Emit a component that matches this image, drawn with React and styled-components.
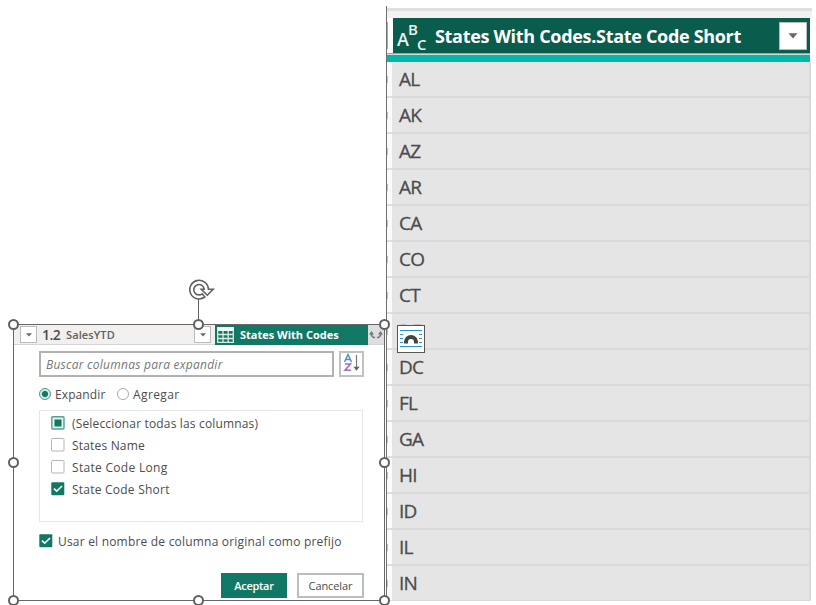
import React from "react";
import styled, { createGlobalStyle } from "styled-components";

const Global = createGlobalStyle`
  *, *::before, *::after { box-sizing: border-box; }
  body { margin: 0; background: #fff; overflow: hidden; }
  svg { display: block; flex: none; }
`;

const Page = styled.main`
  width: 816px;
  height: 605px;
  display: grid;
  grid-template-columns: 386px 426px;
  align-items: start;
  overflow: hidden;
  background: #fff;
  font-family: "Open Sans", "Noto Sans", sans-serif;
  color: #4c4c4c;
`;

const Text = styled.span`
  white-space: nowrap;
  font-size: ${(p) => p.$size || 12}px;
  line-height: 16px;
  letter-spacing: ${(p) => p.$track || 0}px;
  font-weight: ${(p) => p.$weight || 400};
  font-style: ${(p) => (p.$italic ? "italic" : "normal")};
  color: ${(p) => p.$color || "inherit"};
`;

const CodeText = styled(Text)`
  -webkit-text-stroke: 0.3px currentColor;
`;

/* Expand-columns dialog */
const Selection = styled.section`
  position: relative;
  z-index: 2;
  width: 372px;
  height: 277px;
  margin: 324px 0 0 13px;
  border: 1px solid #666;
  background: #fff;
`;

const ColumnBar = styled.header`
  display: flex;
  height: 20px;
  background: #f1f0ef;
  border-bottom: 1px solid #d4d4d4;
`;

const NumberColumn = styled.div`
  display: flex;
  align-items: center;
  width: 201px;
  padding-left: 6px;
`;

const DropButton = styled.span`
  display: flex;
  align-items: center;
  justify-content: center;
  width: ${(p) => p.$size || 17}px;
  height: ${(p) => p.$size || 17}px;
  border: 1px solid #bbb;
  background: #fff;
`;

const NumberLabel = styled.div`
  display: flex;
  align-items: center;
  gap: 6px;
  width: 157px;
  padding: 1px 0 0 5px;
`;

const NestedColumn = styled.div`
  display: flex;
  align-items: center;
  gap: 6px;
  width: 153px;
  height: 20px;
  padding-left: 2px;
  background: #117865;
`;

const ExpandCell = styled.div`
  flex: 1;
  height: 19px;
  display: flex;
  align-items: center;
  justify-content: center;
  background: #dedee0;
`;

const SearchRow = styled.div`
  display: flex;
  gap: 5px;
  margin: 6px 0 0 25px;
`;

const SearchBox = styled.div`
  display: flex;
  align-items: center;
  width: 295px;
  height: 26px;
  padding: 2px 0 0 5px;
  border: 2px solid #b1b1b1;
`;

const SortButton = styled.div`
  width: 25px;
  height: 26px;
  border: 2px solid #c1c1c1;
`;

const RadioRow = styled.div`
  display: flex;
  align-items: center;
  height: 20px;
  margin: 8px 0 0 25px;
`;

const RadioOption = styled.label`
  display: flex;
  align-items: center;
  gap: 4px;
  width: ${(p) => p.$width}px;
`;

const Radio = styled.i`
  width: 12px;
  height: 12px;
  margin-bottom: 3px;
  border-radius: 50%;
  border: 1px solid ${(p) => (p.$on ? "#4a9a89" : "#aaa")};
  background: ${(p) => (p.$on ? "radial-gradient(circle, #117865 0 2.6px, #d9ece8 3.6px)" : "#fff")};
`;

const OptionList = styled.div`
  width: 324px;
  height: 112px;
  margin: 5px 0 0 25px;
  padding: 2px 0 0 11px;
  border: 1px solid #e3e7e9;
`;

const CheckRow = styled.label`
  display: flex;
  align-items: center;
  gap: 7px;
  height: 22px;
  & > svg { margin-bottom: 2px; }
`;

const PrefixRow = styled(CheckRow)`
  gap: 5px;
  margin: 9px 0 0 25px;
`;

const Actions = styled.div`
  display: flex;
  gap: 10px;
  margin: 20px 0 0 207px;
`;

const Button = styled.button`
  width: ${(p) => (p.$primary ? 66 : 67)}px;
  height: 25px;
  padding: 0;
  display: flex;
  align-items: center;
  justify-content: center;
  font-family: inherit;
  border: ${(p) => (p.$primary ? "0" : "2px solid #bdbdbd")};
  background: ${(p) => (p.$primary ? "#117865" : "#fff")};
  color: ${(p) => (p.$primary ? "#fff" : "#4c4c4c")};
`;

const Handle = styled.i`
  position: absolute;
  left: ${(p) => p.$x}px;
  top: ${(p) => p.$y}px;
  width: 11px;
  height: 11px;
  margin: -6px 0 0 -6px;
  border: 2px solid #606060;
  border-radius: 50%;
  background: #fff;
`;

const RotateHandle = styled.svg`
  position: absolute;
  left: 173px;
  top: -46px;
`;

/* State code table */
const Table = styled.section`
  height: 595px;
  margin-top: 6px;
  border-left: 1px solid #707070;
  overflow: hidden;
`;

const TopStrip = styled.div`
  height: 12px;
  border-top: 2px solid #fff;
  background: linear-gradient(#dfdfdf 0 3px, #f4f2f1 3px);
`;

const TableHead = styled.div`
  display: flex;
  width: 423px;
  height: 36px;
  background: #fff;
  border-bottom: 1px solid #92aaa3;
`;

const GutterHead = styled.div`
  width: 6px;
  margin: 4px 0;
  border-left: 1px solid #aaa;
  background: #fff;
`;

const HeadCell = styled.div`
  display: flex;
  align-items: center;
  width: 417px;
  padding: 0 3px 0 4px;
  background: #0a5c4d;
`;

const HeadText = styled.div`
  display: flex;
  width: 344px;
  margin-left: 10px;
`;

const Accent = styled.div`
  height: 8px;
  width: 423px;
  border-top: 1px solid #d7d7d7;
  background: #01b8aa;
`;

const Row = styled.div`
  display: grid;
  grid-template-columns: 6px 418px;
  height: 36px;
`;

const Gutter = styled.div`
  display: flex;
  align-items: center;
  background: #fbfbfb;
  border-bottom: 2px solid #dedede;
  border-right: 1px solid #e4e4e4;
`;

const Tick = styled.i`
  width: 1px;
  height: 7px;
  background: #8ed6d2;
`;

const Cell = styled.div`
  display: flex;
  align-items: center;
  padding-left: 6px;
  background: #e5e5e5;
  border-bottom: 2px solid #d9d9d9;
  border-right: 2px solid #d9d9d9;
`;

const LayoutOptions = styled.div`
  position: absolute;
  z-index: 3;
  left: 397px;
  top: 325px;
  width: 28px;
  height: 28px;
  border: 1px solid #555;
  background: #fff;
`;

const Caret = ({ w = 6 }) => (
  <svg width={w} height={w / 2 + 1} viewBox="0 0 6 4">
    <path d="M0 .2H6L3 3.6Z" fill="#686868" />
  </svg>
);

const Check = ({ state }) => (
  <svg width="14" height="14" viewBox="0 0 14 14">
    {state === "on" && (
      <>
        <rect x=".3" y=".3" width="13" height="13" rx="1" fill="#117865" />
        <path d="M3 6.7 5.7 9.2 11 4" fill="none" stroke="#fff" strokeWidth="1.6" />
      </>
    )}
    {state === "off" && <rect x=".5" y=".5" width="12.5" height="12.5" rx="1" fill="#fff" stroke="#b5b5b5" />}
    {state === "mixed" && (
      <>
        <rect x=".8" y=".8" width="12.2" height="12.2" rx="1" fill="#e3f2ef" stroke="#55a091" strokeWidth="1.4" />
        <rect x="3.5" y="3.5" width="7" height="7" fill="#117865" />
      </>
    )}
  </svg>
);

const TableIcon = () => (
  <svg width="17" height="16" viewBox="0 0 17 16">
    <path fill="#f2f8f6" d="M0 0H17V4H0Z" />
    <path d="M.7 3V15.3H16.3V3M.7 7.5H16.3M.7 11.5H16.3M6 4V15M11.2 4V15" fill="none" stroke="#d8ebe6" strokeWidth="1.3" />
  </svg>
);

const ExpandIcon = () => (
  <svg width="14" height="10" viewBox="0 0 14 10">
    <path d="M2.5 3.5V5.5L4.5 7.5H6M11.5 3.5V5.5L9.5 7.5H8" fill="none" stroke="#777" strokeWidth="1.6" />
    <path d="M0 4.5 2.5 1 5 4.5ZM9 4.5 11.5 1 14 4.5Z" fill="#777" />
  </svg>
);

const SortIcon = () => (
  <svg width="21" height="22" viewBox="0 0 21 22">
    <path d="M3.5 9 7 1.5 10.5 9M4.7 6.6H9.3" fill="none" stroke="#558dcc" strokeWidth="1.5" />
    <path d="M4 11H9.5L4 17.3H10" fill="none" stroke="#a66bc2" strokeWidth="1.6" />
    <path d="M15.5 2V16" stroke="#777" strokeWidth="1.2" />
    <path d="M12.3 13.8H18.7L15.5 17.8Z" fill="#666" />
  </svg>
);

const TypeIcon = styled.div`
  display: flex;
  width: 28px;
  height: 30px;
  color: #e8f2ef;
`;

const Letter = styled.span`
  font-size: ${(p) => p.$size}px;
  line-height: 12px;
  font-weight: 600;
  width: ${(p) => p.$width}px;
  height: 12px;
  margin-top: ${(p) => p.$drop}px;
  margin-left: ${(p) => p.$shift || 0}px;
`;

const handles = [[0, 0], [185, 0], [371, 0], [0, 138], [371, 138], [0, 276], [185, 276], [371, 276]];
const codes = ["AL", "AK", "AZ", "AR", "CA", "CO", "CT", "DE", "DC", "FL", "GA", "HI", "ID", "IL", "IN"];
const options = [
  ["(Seleccionar todas las columnas)", "mixed", 0.16],
  ["States Name", "off", 0.18],
  ["State Code Long", "off", 0.3],
  ["State Code Short", "on", 0.23],
];

export default function App() {
  return (
    <>
      <Global />
      <Page>
        <Selection>
          <ColumnBar>
            <NumberColumn>
              <DropButton><Caret /></DropButton>
              <NumberLabel>
                <Text $size={14} $track={-0.6} $weight={600}>1.2</Text>
                <Text $size={11} $weight={600} $track={0.1} $color="#606060">SalesYTD</Text>
              </NumberLabel>
              <DropButton><Caret /></DropButton>
            </NumberColumn>
            <NestedColumn>
              <TableIcon />
              <Text $size={11} $weight={700} $color="#fff">States With Codes</Text>
            </NestedColumn>
            <ExpandCell><ExpandIcon /></ExpandCell>
          </ColumnBar>
          <SearchRow>
            <SearchBox>
              <Text $italic $track={0.25} $color="#777">Buscar columnas para expandir</Text>
            </SearchBox>
            <SortButton><SortIcon /></SortButton>
          </SearchRow>
          <RadioRow>
            <RadioOption $width={78}><Radio $on /><Text $track={0.1}>Expandir</Text></RadioOption>
            <RadioOption $width={70}><Radio /><Text $track={0.4}>Agregar</Text></RadioOption>
          </RadioRow>
          <OptionList>
            {options.map(([label, state, track]) => (
              <CheckRow key={label}>
                <Check state={state} />
                <Text $track={track}>{label}</Text>
              </CheckRow>
            ))}
          </OptionList>
          <PrefixRow>
            <Check state="on" />
            <Text $track={0.2}>Usar el nombre de columna original como prefijo</Text>
          </PrefixRow>
          <Actions>
            <Button $primary><Text $size={11} $weight={600} $track={-0.3}>Aceptar</Text></Button>
            <Button><Text $size={11} $track={-0.1}>Cancelar</Text></Button>
          </Actions>
          <RotateHandle width="30" height="46" viewBox="0 0 30 46">
            <path d="M11.5 20V42" stroke="#606060" />
            <path d="M17.8 18A9.3 9.3 0 1 1 21.4 10.2H26.2L20.3 16.2 14.2 10.2H17.2A5.2 5.2 0 1 0 15.2 14.8Z" fill="#fff" stroke="#606060" strokeWidth="1.6" strokeLinejoin="miter" />
          </RotateHandle>
          {handles.map(([x, y]) => <Handle key={`${x}-${y}`} $x={x} $y={y} />)}
        </Selection>

        <Table>
          <TopStrip />
          <TableHead>
            <GutterHead />
            <HeadCell>
              <TypeIcon>
                <Letter $size={18} $width={12} $drop={12}>A</Letter>
                <Letter $size={15} $width={9} $drop={2} $shift={-1}>B</Letter>
                <Letter $size={15} $width={9} $drop={17}>C</Letter>
              </TypeIcon>
              <HeadText><Text $size={18} $weight={700} $track={-0.31} $color="#fff">States With Codes.State Code Short</Text></HeadText>
              <DropButton $size={28}><Caret w={10} /></DropButton>
            </HeadCell>
          </TableHead>
          <Accent />
          {codes.map((code) => (
            <Row key={code}>
              <Gutter><Tick /></Gutter>
              <Cell><CodeText $size={19} $track={-0.8}>{code}</CodeText></Cell>
            </Row>
          ))}
        </Table>
        <LayoutOptions>
          <svg width="26" height="26" viewBox="0 0 26 26">
            <path d="M2 4.5H24M2 8.5H5M21 8.5H24M2 12.5H5M21 12.5H24M2 16.5H5M21 16.5H24M2 20.5H24" stroke="#2b91d0" />
            <path d="M6 17.5V16A7 7 0 0 1 20 16V17.5H16V16A3 3 0 0 0 10 16V17.5Z" fill="#444" />
          </svg>
        </LayoutOptions>
      </Page>
    </>
  );
}
